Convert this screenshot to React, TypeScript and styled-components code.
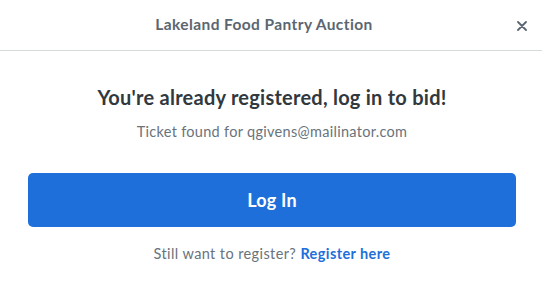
import React from "react";
import styled, { createGlobalStyle } from "styled-components";

const Global = createGlobalStyle`
  html, body { margin: 0; padding: 0; background: #ffffff; }
  body { font-family: Lato, "Open Sans", sans-serif; -webkit-font-smoothing: antialiased; }
  * { box-sizing: border-box; }
`;

const Modal = styled.div`
  width: 542px;
  height: 292px;
  background: #ffffff;
  display: flex;
  flex-direction: column;
`;

const Header = styled.div`
  height: 51px;
  border-bottom: 1px solid #d5dadd;
  display: flex;
  align-items: center;
  justify-content: center;
  position: relative;
  padding: 0 14px 2px 0;
`;

const Title = styled.h1`
  margin: 0;
  font-size: 15.5px;
  font-weight: 700;
  color: #5b6670;
  letter-spacing: 0.4px;
`;

const Close = styled.button`
  position: absolute;
  right: 12px;
  top: 18px;
  width: 16px;
  height: 16px;
  border: 0;
  padding: 0;
  background: transparent;
  display: flex;
  align-items: center;
  justify-content: center;
  cursor: pointer;
`;

const Body = styled.div`
  display: flex;
  flex-direction: column;
  align-items: center;
  padding: 34px 26px 0 28px;
`;

const Heading = styled.h2`
  margin: 0;
  font-size: 20px;
  font-weight: 700;
  color: #31383e;
  line-height: 24px;
  letter-spacing: 0.25px;
`;

const Sub = styled.p`
  margin: 14px 0 0;
  font-size: 14.5px;
  color: #69737c;
  line-height: 18px;
  letter-spacing: 0.3px;
`;

const LoginButton = styled.button`
  margin-top: 32px;
  width: 100%;
  height: 54px;
  border: 0;
  border-radius: 5px;
  background: #1e6fda;
  color: #ffffff;
  font-family: inherit;
  font-size: 18px;
  font-weight: 700;
  letter-spacing: 0.2px;
  cursor: pointer;
`;

const Footer = styled.p`
  margin: 18px 0 0;
  font-size: 14.5px;
  color: #69737c;
  line-height: 18px;
  letter-spacing: 0.4px;
`;

const Link = styled.a`
  color: #1e6fda;
  font-weight: 700;
  text-decoration: none;
`;

export default function App() {
  return (
    <>
      <Global />
      <Modal>
        <Header>
          <Title>Lakeland Food Pantry Auction</Title>
          <Close aria-label="Close">
            <svg width="10" height="10" viewBox="0 0 10 10">
              <path d="M1 1 L9 9 M9 1 L1 9" stroke="#5b6670" strokeWidth="1.8" strokeLinecap="round" />
            </svg>
          </Close>
        </Header>
        <Body>
          <Heading>You're already registered, log in to bid!</Heading>
          <Sub>Ticket found for qgivens@mailinator.com</Sub>
          <LoginButton>Log In</LoginButton>
          <Footer>
            Still want to register? <Link href="#">Register here</Link>
          </Footer>
        </Body>
      </Modal>
    </>
  );
}
